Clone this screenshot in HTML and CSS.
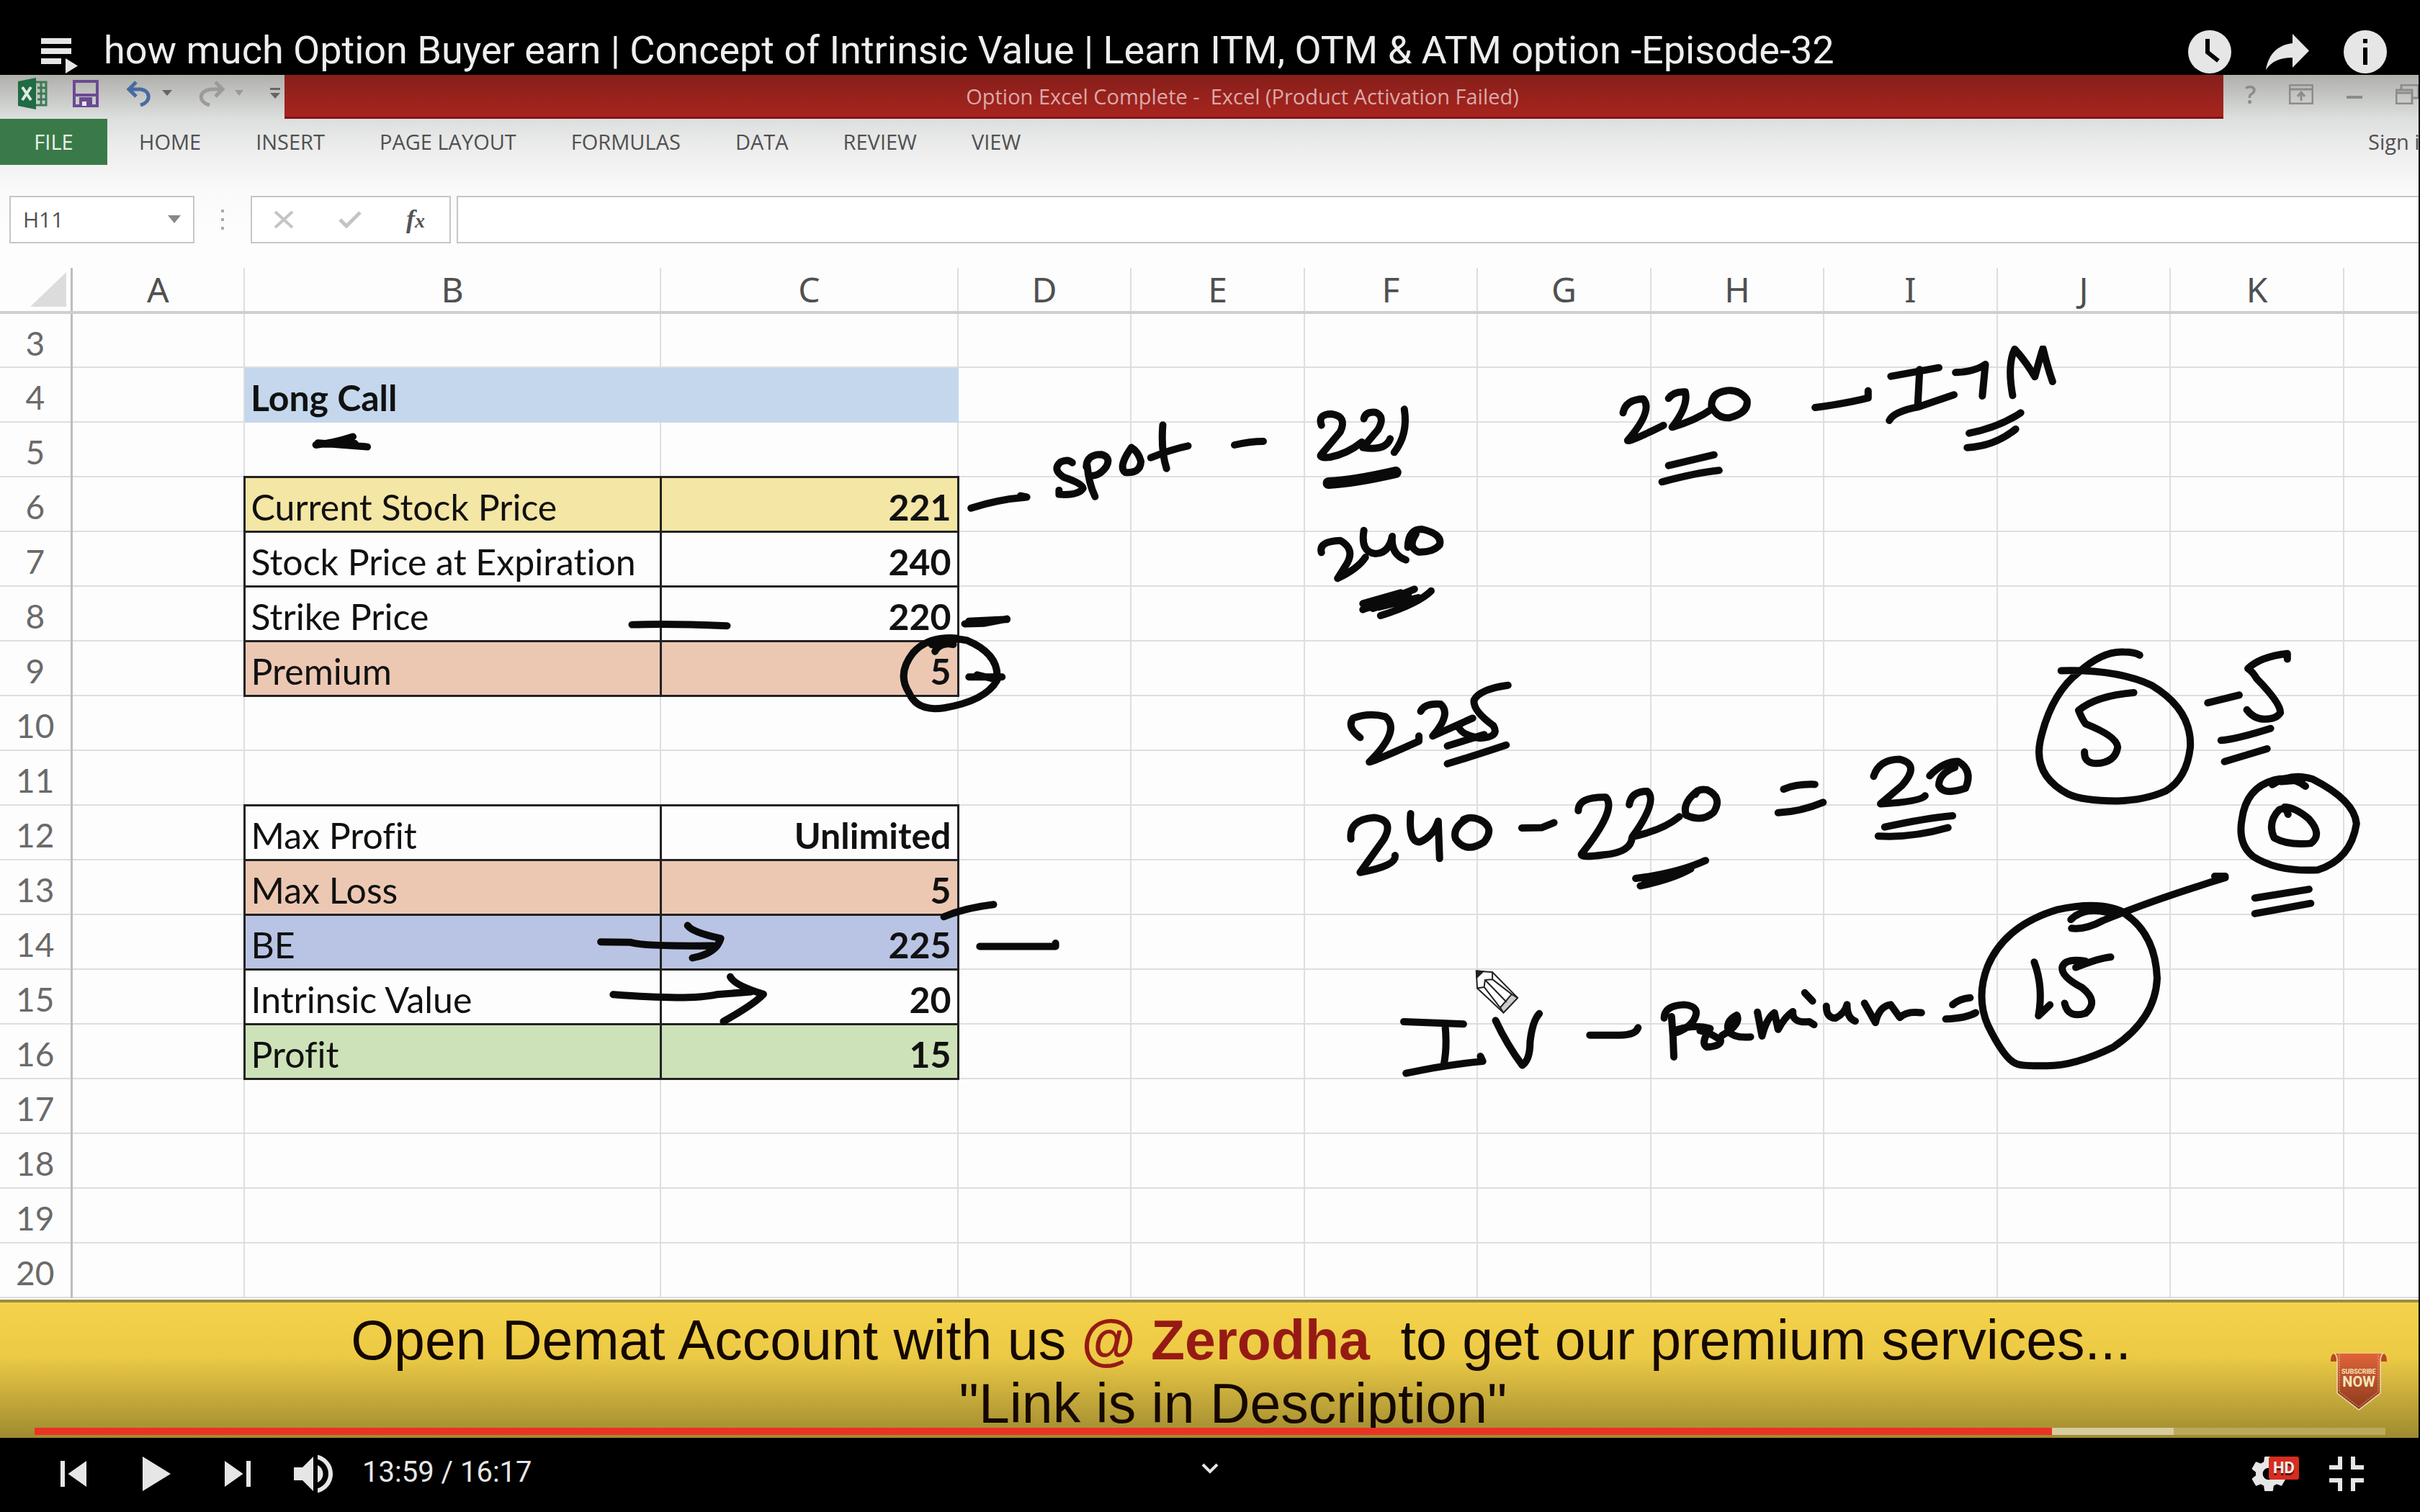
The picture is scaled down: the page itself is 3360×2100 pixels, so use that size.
FILE: index.html
```html
<!DOCTYPE html>
<html lang="en">
<head>
<meta charset="utf-8">
<title>how much Option Buyer earn</title>
<link rel="stylesheet" href="styles.css">
</head>
<body>
<div class="player">
  <header class="top-bar">
    <button class="icon-button playlist" aria-label="Playlist">
      <svg width="52" height="50" viewBox="0 0 52 50"><path d="M0 0h42v8H0zM0 14h42v8H0zM0 28h28v8H0zM34 28l17 10.500-17 10.500z"/></svg>
    </button>
    <h1 class="video-title">how much Option Buyer earn | Concept of Intrinsic Value | Learn ITM, OTM &amp; ATM option -Episode-32</h1>
    <div class="top-actions">
      <button class="icon-button" aria-label="Watch later">
        <svg width="60" height="60" viewBox="0 0 60 60"><circle cx="30" cy="30" r="30"/><path class="cut" d="M27 12v18.500l15 12" /></svg>
      </button>
      <button class="icon-button" aria-label="Share">
        <svg width="60" height="60" viewBox="0 0 60 60"><path d="M37 5L60 28.500 37 52V38C20 38 8 43 0 55 3 38 12 21 37 18z"/></svg>
      </button>
      <button class="icon-button" aria-label="Info">
        <svg width="60" height="60" viewBox="0 0 60 60"><circle cx="30" cy="30" r="30"/><path class="hole" d="M27 12h6v6h-6zM27 24h6v24h-6z"/></svg>
      </button>
    </div>
  </header>

  <main class="frame">
    <section class="excel">
      <div class="title-row">
        <div class="quick-access">
          <svg width="42" height="44" viewBox="0 0 42 44"><path fill="#1f6b43" d="M0 5L25 0v44L0 39z"/><path fill="none" stroke="#3d7a57" stroke-width="3" d="M25 6h14v32H25M27 14h12M27 22h12M27 30h12M32 6v32"/><path fill="none" stroke="#dfe9e3" stroke-width="4" d="M6 13l12 18M18 13L6 31"/></svg>
          <svg width="36" height="38" viewBox="0 0 36 38"><path fill="none" stroke="#6b4a94" stroke-width="4" d="M2 2h32v34H2z"/><path fill="#6b4a94" d="M4 19h28v4H4zM9 24h18v12H9z"/><path fill="#e8e6ee" d="M13 30h6v6h-6z"/></svg>
          <svg class="undo" width="64" height="36" viewBox="0 0 64 36"><path fill="none" stroke="#466ba3" stroke-width="5" d="M14 2L4 12l10 10M5 12h15c15 2 15 18 0 22"/><path fill="#666" d="M50 13h14l-7 8z"/></svg>
          <svg class="redo" width="64" height="36" viewBox="0 0 64 36"><path fill="none" stroke="#9b9b9b" stroke-width="5" d="M24 2l10 10-10 10M33 12H18C0 14 0 30 16 34"/><path fill="#999" d="M51 13h12l-6 8z"/></svg>
          <svg class="more" width="14" height="16" viewBox="0 0 14 16"><path fill="#666" d="M0 0h14v3H0zM0 7h14l-7 8z"/></svg>
        </div>
        <p class="workbook-name">Option Excel Complete -&nbsp; Excel (Product Activation Failed)</p>
        <div class="window-buttons">
          <span class="help">?</span>
          <svg width="34" height="28" viewBox="0 0 34 28"><path d="M1 1h32v26H1zM1 7h32M17 23V12M12 17l5-6 5 6"/></svg>
          <svg width="22" height="28" viewBox="0 0 22 28"><path stroke-width="4" d="M0 18h22"/></svg>
          <svg class="restore" width="34" height="28" viewBox="0 0 34 28"><path d="M1 8h22v19H1zM8 8V1h24v18h-9M1 12h22"/></svg>
        </div>
      </div>
      <nav class="ribbon">
        <button class="file-tab">FILE</button>
        <div class="tabs">
          <button>HOME</button><button>INSERT</button><button>PAGE LAYOUT</button><button>FORMULAS</button><button>DATA</button><button>REVIEW</button><button>VIEW</button>
        </div>
        <a class="sign-in" href="#">Sign in</a>
      </nav>
      <div class="formula-row">
        <div class="name-box">
          <select aria-label="Cell name"><option>H11</option></select>
          <svg width="18" height="12" viewBox="0 0 18 12"><path fill="#888" d="M0 0h18l-9 11z"/></svg>
        </div>
        <svg class="grip" width="4" height="28" viewBox="0 0 4 28"><path stroke="#aaa" stroke-width="4" stroke-dasharray="4 8" d="M2 0v28"/></svg>
        <div class="formula-buttons">
          <button aria-label="Cancel"><svg width="28" height="24" viewBox="0 0 28 24"><path fill="none" stroke="#c4c4c4" stroke-width="4" d="M2 1l24 22M26 1L2 23"/></svg></button>
          <button aria-label="Enter"><svg width="32" height="24" viewBox="0 0 32 24"><path fill="none" stroke="#c4c4c4" stroke-width="5" d="M2 12l9 9L30 2"/></svg></button>
          <button class="fx" aria-label="Insert function">f<small>x</small></button>
        </div>
        <input class="formula" type="text" aria-label="Formula">
      </div>
      <table class="sheet">
        <colgroup><col class="w-num"><col class="w-a"><col class="w-b"><col class="w-c"><col class="w-a"><col class="w-e"><col class="w-a"><col class="w-e"><col class="w-a"><col class="w-e"><col class="w-a"><col class="w-e"><col></colgroup>
        <thead>
          <tr><th><svg class="corner" width="50" height="48" viewBox="0 0 50 48"><path fill="#dcdcdc" d="M50 0v48H0z"/></svg></th><th>A</th><th>B</th><th>C</th><th>D</th><th>E</th><th>F</th><th>G</th><th>H</th><th>I</th><th>J</th><th>K</th><th></th></tr>
        </thead>
        <tbody>
          <tr><th>3</th><td></td><td></td><td></td><td></td><td></td><td></td><td></td><td></td><td></td><td></td><td></td><td></td></tr>
          <tr><th>4</th><td></td><td class="heading" colspan="2">Long Call</td><td></td><td></td><td></td><td></td><td></td><td></td><td></td><td></td><td></td></tr>
          <tr><th>5</th><td></td><td></td><td></td><td></td><td></td><td></td><td></td><td></td><td></td><td></td><td></td><td></td></tr>
          <tr><th>6</th><td></td><td class="box yellow">Current Stock Price</td><td class="box value yellow">221</td><td></td><td></td><td></td><td></td><td></td><td></td><td></td><td></td><td></td></tr>
          <tr><th>7</th><td></td><td class="box">Stock Price at Expiration</td><td class="box value">240</td><td></td><td></td><td></td><td></td><td></td><td></td><td></td><td></td><td></td></tr>
          <tr><th>8</th><td></td><td class="box">Strike Price</td><td class="box value">220</td><td></td><td></td><td></td><td></td><td></td><td></td><td></td><td></td><td></td></tr>
          <tr><th>9</th><td></td><td class="box peach">Premium</td><td class="box value peach">5</td><td></td><td></td><td></td><td></td><td></td><td></td><td></td><td></td><td></td></tr>
          <tr><th>10</th><td></td><td></td><td></td><td></td><td></td><td></td><td></td><td></td><td></td><td></td><td></td><td></td></tr>
          <tr><th>11</th><td></td><td></td><td></td><td></td><td></td><td></td><td></td><td></td><td></td><td></td><td></td><td></td></tr>
          <tr><th>12</th><td></td><td class="box">Max Profit</td><td class="box value">Unlimited</td><td></td><td></td><td></td><td></td><td></td><td></td><td></td><td></td><td></td></tr>
          <tr><th>13</th><td></td><td class="box peach">Max Loss</td><td class="box value peach">5</td><td></td><td></td><td></td><td></td><td></td><td></td><td></td><td></td><td></td></tr>
          <tr><th>14</th><td></td><td class="box blue">BE</td><td class="box value blue">225</td><td></td><td></td><td></td><td></td><td></td><td></td><td></td><td></td><td></td></tr>
          <tr><th>15</th><td></td><td class="box">Intrinsic Value</td><td class="box value">20</td><td></td><td></td><td></td><td></td><td></td><td></td><td></td><td></td><td></td></tr>
          <tr><th>16</th><td></td><td class="box green">Profit</td><td class="box value green">15</td><td></td><td></td><td></td><td></td><td></td><td></td><td></td><td></td><td></td></tr>
          <tr><th>17</th><td></td><td></td><td></td><td></td><td></td><td></td><td></td><td></td><td></td><td></td><td></td><td></td></tr>
          <tr><th>18</th><td></td><td></td><td></td><td></td><td></td><td></td><td></td><td></td><td></td><td></td><td></td><td></td></tr>
          <tr><th>19</th><td></td><td></td><td></td><td></td><td></td><td></td><td></td><td></td><td></td><td></td><td></td><td></td></tr>
          <tr><th>20</th><td></td><td></td><td></td><td></td><td></td><td></td><td></td><td></td><td></td><td></td><td></td><td></td></tr>
        </tbody>
      </table>
    </section>

    <section class="banner">
      <p>Open Demat Account with us <strong>@ Zerodha</strong>&nbsp; to get our premium services...</p>
      <p>"Link is in Description"</p>
      <a class="subscribe" href="#" aria-label="Subscribe now">
        <svg width="78" height="80" viewBox="0 0 78 80">
          <defs><linearGradient id="ribbon" x1="0" y1="0" x2="0" y2="1"><stop offset="0" stop-color="#e0643a"/><stop offset="1" stop-color="#8a3a1c"/></linearGradient></defs>
          <path fill="#b8491f" d="M0 12C0 3 3 0 8 0v12zM78 12C78 3 75 0 70 0v12z"/>
          <path fill="url(#ribbon)" stroke="#f3dcae" stroke-width="1.500" d="M4 0Q9 2 9 12V56L39 79 69 56V12Q69 2 74 0z"/>
          <path fill="none" stroke="#e9b58c" stroke-dasharray="2 1.500" d="M12 2V54L39 75 66 54V2"/>
          <text class="ribbon-small" x="39" y="29" text-anchor="middle">SUBSCRIBE</text>
          <text class="ribbon-big" x="39" y="47" text-anchor="middle">NOW</text>
        </svg>
      </a>
    </section>

    <svg class="ink" aria-hidden="true">
      <path d="M1714 514Q1735 509 1754 509"/>
      <svg x="0" y="336" width="1120" height="600" viewBox="0 0 1568 1568" preserveAspectRatio="none">
        <path d="M614 465Q650 457 686 435M618 458L714 472M630 462L690 460"/>
      </svg>
      <svg x="800" y="376" width="900" height="600" viewBox="0 0 1568 1568" preserveAspectRatio="none">
        <path d="M955 590Q1020 558 1090 550M1075 545L1090 550"/>
        <path d="M1200 425Q1190 410 1172 422Q1150 450 1180 478Q1225 500 1226 518Q1215 545 1168 540V525M1236 435Q1240 500 1255 548M1234 440Q1235 395 1270 395Q1295 405 1282 440Q1265 475 1245 472M1343 370Q1310 440 1328 460Q1365 465 1366 420Q1360 385 1343 370M1419 288Q1414 380 1428 446M1390 407Q1440 376 1480 364"/>
        <path d="M940 1010L985 1008 1042 992M950 1000L1042 994M135 1013Q220 1008 365 1017"/>
        <path d="M868 1110Q880 1075 912 1085M920 1062Q850 1055 815 1115Q775 1190 805 1260Q825 1330 890 1315Q990 1290 1018 1215Q1025 1120 945 1070Q900 1055 860 1085M880 1066L890 1085M950 1203H1030M970 1195L1010 1210"/>
      </svg>
      <svg x="1780" y="376" width="1100" height="500" viewBox="0 0 1568 1500" preserveAspectRatio="none">
        <path d="M78 332Q70 285 98 285Q130 295 115 360L77 455Q73 470 95 465Q130 450 158 402M162 305Q165 275 185 278Q205 295 190 350L160 425Q205 440 214 388M242 265Q250 370 222 445"/>
        <path class="bold" d="M92 573Q142 568 225 528"/>
        <path d="M78 862Q72 815 115 812Q148 850 125 920L110 970Q150 930 165 882M162 770Q155 862 185 867Q212 865 218 795Q215 870 245 893M249 840Q250 765 277 765Q318 785 312 830Q300 862 270 860Q248 840 265 785"/>
        <path d="M160 1100L262 1015M160 1075L235 1030M195 1125Q270 1075 295 1022M165 1095Q200 1080 250 1035M190 1090L270 1050M180 1095L230 1060"/>
        <path d="M675 280Q680 225 715 222Q735 270 684 395Q685 405 755 332M765 220Q775 190 798 193Q805 250 772 340Q820 310 850 265M880 188Q850 195 850 250Q860 303 885 301Q925 280 920 225Q905 180 878 188M765 500L855 455M752 568Q820 530 865 520"/>
        <path d="M1055 258Q1120 240 1160 218V188M1205 128L1300 92M1262 100L1258 255M1202 312Q1210 275 1260 255L1330 205M1333 112Q1370 110 1392 78L1386 210M1446 208Q1435 80 1450 15Q1470 60 1490 130Q1500 50 1506 12Q1515 90 1525 150M1360 365Q1420 340 1462 280M1356 425Q1410 420 1452 348"/>
      </svg>
      <svg x="1780" y="796" width="1000" height="650" viewBox="0 0 1568 1568" preserveAspectRatio="none">
        <path d="M170 300Q140 265 155 235Q190 215 225 230Q260 275 190 382Q200 380 298 312V295M302 212Q310 185 345 188Q370 220 328 295Q350 280 415 235M492 125Q430 138 418 175Q415 210 460 260Q475 300 430 302Q390 290 385 265M360 328L440 290M360 388Q430 355 488 325"/>
        <path d="M150 640Q145 575 200 568Q245 575 222 640L170 752Q250 730 246 695M280 555Q275 652 300 650Q330 630 340 580L343 705M405 570Q370 600 378 640Q400 690 440 650Q465 600 430 575Q410 562 395 575M522 603L565 602 592 585"/>
        <path d="M645 545Q645 498 705 500Q730 540 652 690Q648 704 700 693Q760 685 762 635M756 525Q760 480 795 480Q820 510 763 632Q830 610 865 565M905 478Q870 520 880 560Q915 585 940 550Q960 500 925 475Q905 470 900 490M770 772Q860 755 922 712M780 797Q850 775 890 740M790 785L860 755M1092 473Q1120 455 1160 457M1080 552Q1130 548 1178 517"/>
        <path d="M1288 430Q1300 373 1345 373Q1390 390 1350 460L1303 522Q1390 515 1400 495M1410 428Q1440 380 1472 380Q1505 410 1488 470Q1440 495 1430 460Q1430 420 1465 400M1312 600Q1400 570 1460 562M1298 630Q1370 637 1450 602"/>
        <path d="M265 1252L395 1260M355 1262Q360 1340 352 1398M270 1425Q360 1395 437 1385L432 1368M465 1248Q490 1330 523 1398Q540 1380 540 1320Q545 1250 560 1225M670 1297H735Q770 1297 775 1272"/>
        <path d="M848 1235Q852 1300 853 1370M832 1240Q832 1198 875 1195Q915 1200 895 1250Q880 1280 852 1292M862 1278Q900 1260 932 1275Q910 1325 925 1337Q955 1335 955 1315Q935 1290 910 1282M958 1298Q1000 1260 990 1230Q965 1250 972 1285Q985 1308 1020 1303M1035 1220L1045 1300Q1055 1240 1072 1222L1080 1278Q1095 1235 1112 1218Q1110 1258 1148 1252L1158 1262M1138 1155L1155 1183M1185 1200Q1185 1240 1205 1240Q1225 1225 1230 1195Q1230 1240 1248 1250M1268 1190L1292 1255Q1300 1200 1325 1195L1345 1238Q1360 1215 1392 1222M1460 1195Q1475 1175 1498 1172M1445 1243Q1490 1240 1510 1222"/>
        <g class="pencil"><path fill="#fff" d="M423 1082L458 1086 513 1172 482 1222 425 1140z"/><path fill="#ccc" d="M513 1172L482 1222 475 1205 500 1160z"/><path d="M425 1140L440 1136 442 1112 458 1110V1086M440 1136L475 1205M458 1110L500 1160M442 1112L488 1185"/><path fill="#222" d="M423 1082L438 1084 424 1104z"/></g>
      </svg>
      <svg x="2600" y="756" width="760" height="680" viewBox="0 0 1568 1568" preserveAspectRatio="none">
        <path d="M540 165Q700 160 800 212Q915 290 910 410Q900 510 840 550Q780 580 700 582Q600 582 560 560Q460 500 480 390Q510 240 590 170Q660 100 720 105Q750 105 765 115M748 235Q640 245 590 292Q600 320 610 335Q700 375 702 410Q695 460 640 462Q605 460 607 425"/>
        <path d="M960 268L1050 243M1188 128V110Q1110 120 1075 158Q1090 170 1100 190Q1170 270 1168 300Q1155 322 1120 320Q1090 318 1072 290M998 388Q1040 385 1140 350M1008 456L1130 415"/>
        <path d="M1145 530Q1200 490 1260 512Q1380 580 1386 655Q1370 770 1275 803Q1160 810 1090 760Q1045 720 1058 640Q1070 540 1150 515Q1200 500 1240 535M1170 520L1230 515M1190 625Q1185 600 1165 610Q1130 650 1150 700Q1190 725 1255 718Q1290 690 1250 640Q1210 602 1180 602M1095 893L1250 865M1095 943L1255 910"/>
        <path d="M570 990Q610 995 660 965Q800 900 1010 828M980 823L1010 823M568 962Q610 915 690 945M725 945Q810 1010 815 1150Q810 1280 690 1370Q580 1430 500 1430Q430 1432 415 1425Q380 1415 330 1300Q295 1210 330 1110Q380 980 530 930Q660 898 730 945"/>
        <path d="M463 1098Q490 1180 475 1270L508 1235M682 1082Q650 1085 582 1115M610 1095Q550 1085 543 1115Q540 1145 600 1180Q650 1225 610 1262Q560 1280 550 1230"/>
      </svg>
      <svg x="0" y="956" width="1500" height="760" viewBox="0 0 1568 1568" preserveAspectRatio="none">
        <path d="M1370 440Q1400 415 1442 405M1422 525H1532V516M872 512L915 513Q930 525 1035 523M998 465Q1005 485 1046 502Q1040 545 1005 558M890 663Q1000 680 1040 663L1090 655M1060 612Q1065 635 1108 662Q1095 690 1050 740"/>
      </svg>
    </svg>
    <input class="progress" type="range" min="0" max="977" value="839" aria-label="Seek">
  </main>

  <footer class="controls">
    <div class="transport">
      <button class="icon-button" aria-label="Previous"><svg width="108" height="102" viewBox="0 1 36 34"><path d="M12 12h2v12h-2zM15.500 18l8.500 6V12z"/></svg></button>
      <button class="icon-button" aria-label="Play"><svg width="108" height="102" viewBox="0 1 36 34"><path d="M12 10l13 8-13 8z"/></svg></button>
      <button class="icon-button" aria-label="Next"><svg width="108" height="102" viewBox="0 1 36 34"><path d="M12 24l8.500-6L12 12zM22 12v12h2V12z"/></svg></button>
    </div>
    <button class="icon-button" aria-label="Mute"><svg width="108" height="102" viewBox="0 1 36 34"><path d="M8 21h4l5 5V10l-5 5H8zM19 14v8c1.480-.68 2.500-2.230 2.500-4s-1.020-3.260-2.500-4zM19 11.290c2.890.86 5 3.540 5 6.710s-2.110 5.850-5 6.710v2.060c4.010-.91 7-4.490 7-8.770s-2.990-7.860-7-8.770z"/></svg></button>
    <p class="time">13:59 / 16:17</p>
    <button class="icon-button chevron" aria-label="More videos"><svg width="24" height="16" viewBox="0 0 24 16"><path class="line" d="M2 2l10 10L22 2"/></svg></button>
    <div class="right-controls">
      <button class="icon-button settings" aria-label="Settings">
        <svg width="108" height="102" viewBox="0 1 36 34"><path fill-rule="evenodd" d="M23.940 18.780c.03-.25.05-.51.05-.78 0-.27-.02-.52-.05-.78l1.680-1.320c.15-.12.19-.33.09-.51l-1.600-2.760c-.09-.17-.31-.24-.48-.17l-1.990.8c-.41-.32-.86-.58-1.350-.78l-.3-2.120c-.02-.19-.19-.33-.39-.33h-3.200c-.2 0-.36.14-.39.33l-.3 2.120c-.48.2-.93.47-1.350.78l-1.990-.8c-.18-.07-.39 0-.48.17l-1.600 2.760c-.1.17-.05.39.09.51l1.680 1.320c-.03.25-.05.52-.05.78 0 .26.02.52.05.78l-1.680 1.320c-.15.12-.19.33-.09.51l1.600 2.760c.09.17.31.24.48.17l1.990-.8c.41.32.86.58 1.350.78l.3 2.120c.02.19.19.33.39.33h3.200c.2 0 .36-.14.39-.33l.3-2.120c.48-.2.93-.47 1.350-.78l1.990.8c.18.07.39 0 .48-.17l1.600-2.760c.09-.17.05-.39-.09-.51zM18 20.790a2.790 2.790 0 1 1 0-5.580 2.790 2.790 0 0 1 0 5.580z"/></svg>
        <span class="hd">HD</span>
      </button>
      <button class="icon-button" aria-label="Exit full screen"><svg width="108" height="102" viewBox="0 1 36 34"><path d="M14 14h-4v2h6v-6h-2zM22 14v-4h-2v6h6v-2zM20 26h2v-4h4v-2h-6zM10 22h4v4h2v-6h-6z"/></svg></button>
    </div>
  </footer>
</div>
</body>
</html>
```
FILE: styles.css
```css
* { box-sizing: border-box; }
body { margin: 0; background: #000; font-family: "Open Sans", sans-serif; }
p, h1 { margin: 0; }
svg { display: block; flex: none; }
button, input, select { font: inherit; color: inherit; border: 0; padding: 0; margin: 0; background: none; border-radius: 0; }

.player { display: flex; flex-direction: column; min-height: 100vh; overflow: hidden; }
.icon-button { fill: #e6e6e6; flex: none; }
.cut { fill: none; stroke: #000; stroke-width: 6; }
.hole { fill: #000; }
.line { fill: none; stroke: #e6e6e6; stroke-width: 4; }

/* Title bar of the player */
.top-bar { display: flex; align-items: center; height: 104px; padding: 40px 46px 0 57px; }
.playlist { padding-top: 12px; }
.video-title { flex: 1; padding: 0 0 4px 35px; font: 400 54px/60px Roboto, sans-serif; color: #eee; white-space: nowrap; }
.top-actions { display: flex; gap: 48px; }

/* Video picture */
.frame { position: relative; margin-right: 2px; background: #fdfdfd; overflow: hidden; }
.excel { padding-bottom: 2px; background: linear-gradient(#b0afab, #dcdfde 60px, #ececec 100px, #fafafa 160px, #fdfdfd 220px); color: #505050; }
.title-row { display: flex; height: 61px; }
.quick-access { display: flex; align-items: center; width: 395px; padding: 0 0 9px 25px; }
.quick-access svg + svg { margin-left: 34px; }
.quick-access .undo { margin-left: 38px; }
.quick-access .redo { margin-left: 36px; }
.quick-access .more { margin-left: 36px; }
.workbook-name { flex: 1; padding: 6px 32px 0 0; background: linear-gradient(#861f1b, #a8241e); border-bottom: 3px solid #801518; color: #dba9a7; font-size: 29px; line-height: 48px; text-align: center; white-space: nowrap; }
.window-buttons { display: flex; align-items: center; width: 271px; gap: 46px; padding: 0 0 7px 30px; color: #8c8c8a; overflow: hidden; }
.window-buttons svg { fill: none; stroke: #8c8c8a; stroke-width: 3; }
.help { font-size: 34px; line-height: 40px; font-weight: 600; }
.ribbon { display: flex; align-items: center; height: 64px; overflow: hidden; font-size: 29px; line-height: 40px; }
.file-tab { width: 149px; height: 64px; background: #3a7a48; color: #eaf3ec; }
.tabs { display: flex; flex: 1; gap: 76px; padding-left: 44px; white-space: nowrap; }
.sign-in { width: 70px; color: inherit; text-decoration: none; white-space: nowrap; }
.formula-row { display: flex; align-items: center; height: 109px; padding: 43px 0 0 13px; }
.name-box { display: flex; align-items: center; width: 257px; height: 66px; padding: 0 17px; border: 2px solid #c6c6c6; background: #fff; }
.name-box select { flex: 1; appearance: none; font-size: 30px; line-height: 40px; }
.grip { margin: 0 37px; }
.formula-buttons { display: flex; align-items: center; gap: 62px; width: 278px; height: 66px; padding-left: 30px; border: 2px solid #c6c6c6; background: #fff; }
.fx { font: italic bold 36px/40px "Liberation Serif", serif; color: #555; }
.fx small { font-size: 28px; }
.formula { flex: 1; height: 66px; margin-left: 8px; border: solid #c6c6c6; border-width: 2px 0 2px 2px; background: #fff; }

/* Worksheet */
.sheet { width: 100%; margin-top: 34px; table-layout: fixed; border-collapse: collapse; }
.w-num { width: 99px; }
.w-a { width: 240px; }
.w-b { width: 578px; }
.w-c { width: 413px; }
.w-e { width: 241px; }
.sheet tr { height: 76px; }
.sheet thead tr { height: 62px; }
.sheet th, .sheet td { padding: 0; border: 2px solid #dedede; line-height: 58px; white-space: nowrap; }
.sheet th { font-weight: 400; }
.sheet th:first-child { border-left: 0; border-right: 3px solid #bdbdbd; }
.sheet th:last-child, .sheet td:last-child { border-right: 0; }
.sheet thead th { border-top: 0; border-bottom: 4px solid #cfcfcf; font-family: "Noto Sans", sans-serif; font-size: 48px; }
.sheet tbody th { padding-top: 8px; font-family: Lato, sans-serif; font-size: 46px; color: #6a6a6a; }
.sheet td { padding: 8px 8px 0; font-family: Lato, sans-serif; font-size: 50px; font-variant-ligatures: none; color: #111; }
.corner { margin-left: 42px; }
.sheet .heading { background: #c4d7ec; border-color: #c4d7ec; font-weight: 700; }
.sheet .box { border: 3px solid #222; }
.sheet .value { font-weight: 700; text-align: right; }
.yellow { background: #f4e6a4; }
.peach { background: #ecc8b3; }
.blue { background: #b9c4e4; }
.green { background: #cde2b8; }

/* Sponsor banner */
.banner { position: relative; height: 192px; padding: 8px 0 0 88px; border-top: 4px solid #9a8c46; background: linear-gradient(#f4d24a, #ecca45 40%, #9f8a30); color: #150800; font: 77px/88px "Liberation Sans", Arial, sans-serif; text-align: center; white-space: nowrap; }
.banner p + p { padding-right: 22px; }
.banner strong { color: #961a14; }
.subscribe { position: absolute; right: 44px; bottom: 38px; }
.ribbon-small { font: 700 9px Roboto, sans-serif; fill: #f5e6bb; }
.ribbon-big { font: 700 20px Roboto, sans-serif; fill: #f5e6bb; }

/* Pen strokes drawn over the sheet */
.ink { position: absolute; inset: 0; width: 100%; height: 100%; fill: none; stroke: #0a0a0a; stroke-width: 10; stroke-linecap: round; stroke-linejoin: round; pointer-events: none; }
.ink path { vector-effect: non-scaling-stroke; }
.ink .bold { stroke-width: 16; }
.pencil { stroke: #222; stroke-width: 2; }

.progress { position: absolute; left: 48px; bottom: 4px; width: calc(100% - 94px); height: 10px; appearance: none; background: linear-gradient(90deg, #ea3323 85.8%, #d6cc9c 85.8%, #d6cc9c 91%, #bba95c 91%); }
.progress::-webkit-slider-thumb { appearance: none; width: 0; height: 0; }

/* Player controls */
.controls { position: relative; display: flex; align-items: center; height: 100px; padding: 0 48px; }
.transport { display: flex; gap: 6px; }
.time { flex: 1; padding: 0 0 4px 11px; font: 40px/48px Roboto, sans-serif; color: #e6e6e6; }
.chevron { position: absolute; left: calc(50% - 12px); top: 35px; }
.right-controls { display: flex; }
.settings { position: relative; }
.hd { position: absolute; left: 54px; top: 27px; width: 42px; height: 32px; border-radius: 3px; background: #d62d20; color: #eee; font: 700 22px/32px Roboto, sans-serif; text-align: center; text-shadow: 0 3px 0 #5a0f0a; }
```
